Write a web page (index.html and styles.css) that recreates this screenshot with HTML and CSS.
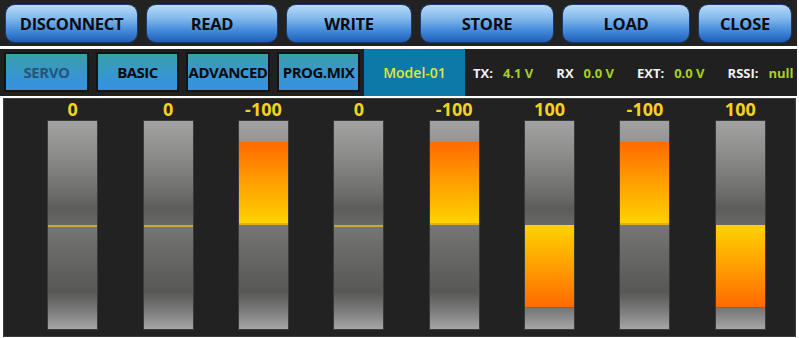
FILE: index.html
```html
<!DOCTYPE html>
<html>
<head>
<meta charset="utf-8">
<link rel="stylesheet" href="styles.css">
</head>
<body>
<div class="app">
  <div class="toolbar">
    <button class="btn w-disc">DISCONNECT</button>
    <button class="btn w-read">READ</button>
    <button class="btn w-write">WRITE</button>
    <button class="btn w-store">STORE</button>
    <button class="btn w-load">LOAD</button>
    <button class="btn w-close">CLOSE</button>
  </div>
  <div class="tabbar">
    <div class="tabs">
      <div class="tab active t1">SERVO</div>
      <div class="tab t2">BASIC</div>
      <div class="tab t3">ADVANCED</div>
      <div class="tab t4">PROG.MIX</div>
    </div>
    <div class="model">Model-01</div>
    <div class="status">
      <span class="lbl">TX:</span><span class="val">4.1 V</span>
      <span class="lbl">RX</span><span class="val">0.0 V</span>
      <span class="lbl">EXT:</span><span class="val">0.0 V</span>
      <span class="lbl">RSSI:</span><span class="val">null</span>
    </div>
  </div>
  <div class="panel">
    <div class="ch"><div class="num">0</div><div class="bar"><div class="zero"></div></div></div>
    <div class="ch"><div class="num">0</div><div class="bar"><div class="zero"></div></div></div>
    <div class="ch"><div class="num">-100</div><div class="bar"><div class="fill up" style="height:40%"></div></div></div>
    <div class="ch"><div class="num">0</div><div class="bar"><div class="zero"></div></div></div>
    <div class="ch"><div class="num">-100</div><div class="bar"><div class="fill up" style="height:40%"></div></div></div>
    <div class="ch"><div class="num">100</div><div class="bar"><div class="fill down" style="height:40%"></div></div></div>
    <div class="ch"><div class="num">-100</div><div class="bar"><div class="fill up" style="height:40%"></div></div></div>
    <div class="ch"><div class="num">100</div><div class="bar"><div class="fill down" style="height:40%"></div></div></div>
  </div>
</div>
</body>
</html>
```
FILE: styles.css
```css
* { box-sizing: border-box; }
html, body { margin: 0; padding: 0; background: #ffffff; }
body { font-family: "Open Sans", "Noto Sans", "Liberation Sans", sans-serif; }
.app { width: 797px; }

.toolbar {
  height: 46px;
  background: #222222;
  display: flex;
  gap: 8px;
  padding: 4px 5px 3px 5px;
}
.btn {
  height: 39px;
  border: 1px solid #1a3a70;
  border-radius: 10px;
  background: linear-gradient(to bottom, #b8dbf7 0%, #84baed 35%, #4289d9 70%, #1f5fb8 100%);
  color: #0c0c14;
  font-family: "Open Sans", "Noto Sans", sans-serif;
  font-weight: 700;
  font-size: 16.5px;
  letter-spacing: -0.3px;
  padding: 0;
}
.w-disc { width: 133px; }
.w-read { width: 132px; }
.w-write { width: 126px; }
.w-store { width: 134px; }
.w-load { width: 128px; }
.w-close { width: 94px; }

.tabbar {
  margin-top: 3px;
  height: 47px;
  background: #202020;
  display: flex;
  align-items: stretch;
}
.tabs {
  display: flex;
  gap: 7px;
  padding: 3px 4px 4px 4px;
}
.tab {
  height: 40px;
  border: 2px solid #141414;
  background: linear-gradient(to bottom, #3a9fa8 0%, #3896d0 60%, #3690e2 100%);
  color: #0a0a10;
  font-weight: 700;
  font-size: 15px;
  letter-spacing: -0.5px;
  display: flex;
  align-items: center;
  justify-content: center;
  white-space: nowrap;
}
.tab.active { color: #22577a; }
.t1 { width: 85px; }
.t2 { width: 83px; }
.t3 { width: 84px; }
.t4 { width: 83px; }
.model {
  width: 101px;
  flex: none;
  background: #0b7aa8;
  color: #e6e23a;
  font-size: 14px;
  font-weight: 600;
  display: flex;
  align-items: center;
  justify-content: center;
}
.status {
  flex: none;
  display: flex;
  align-items: center;
  padding-left: 8px;
  font-size: 13px;
  font-weight: 700;
  white-space: nowrap;
}
.lbl { color: #f2f2f2; margin-right: 10px; }
.val { color: #a6d024; margin-right: 23px; }
.val:last-child { margin-right: 0; }

.panel {
  margin: 2px 0 0 3px;
  width: 793px;
  height: 239px;
  background: #222222;
  border: 1px solid #3c3c3c;
  display: grid;
  grid-template-columns: repeat(8, 1fr);
  padding: 0 7px 5px 21px;
}
.ch {
  display: flex;
  flex-direction: column;
  align-items: center;
}
.num {
  height: 21px;
  line-height: 21px;
  color: #f4d21e;
  font-weight: 700;
  font-size: 18px;
}
.bar {
  position: relative;
  width: 51px;
  height: 210px;
  background: linear-gradient(to bottom,
    #a2a2a2 0%, #8e8e8d 15%, #6c6c6a 35%, #5c5c5a 42%, #686866 50%,
    #767674 50%, #6a6a68 62%, #575755 82%, #7e7e7e 92%, #a6a6a6 100%);
  border: 1px solid #3a3a3a;
}
.zero {
  position: absolute;
  left: 0; right: 0;
  top: 104px;
  height: 2px;
  background: #c9a836;
}
.fill {
  position: absolute;
  left: 0; right: 0;
}
.fill.up {
  bottom: 50%;
  background: linear-gradient(to bottom, #ff6a00 0%, #ff9a00 45%, #ffd200 100%);
  border-bottom: 2px solid #e0b020;
}
.fill.down {
  top: 50%;
  background: linear-gradient(to bottom, #ffd200 0%, #ff9a00 55%, #ff6a00 100%);
  border-bottom: 1px solid #c05400;
}
```
